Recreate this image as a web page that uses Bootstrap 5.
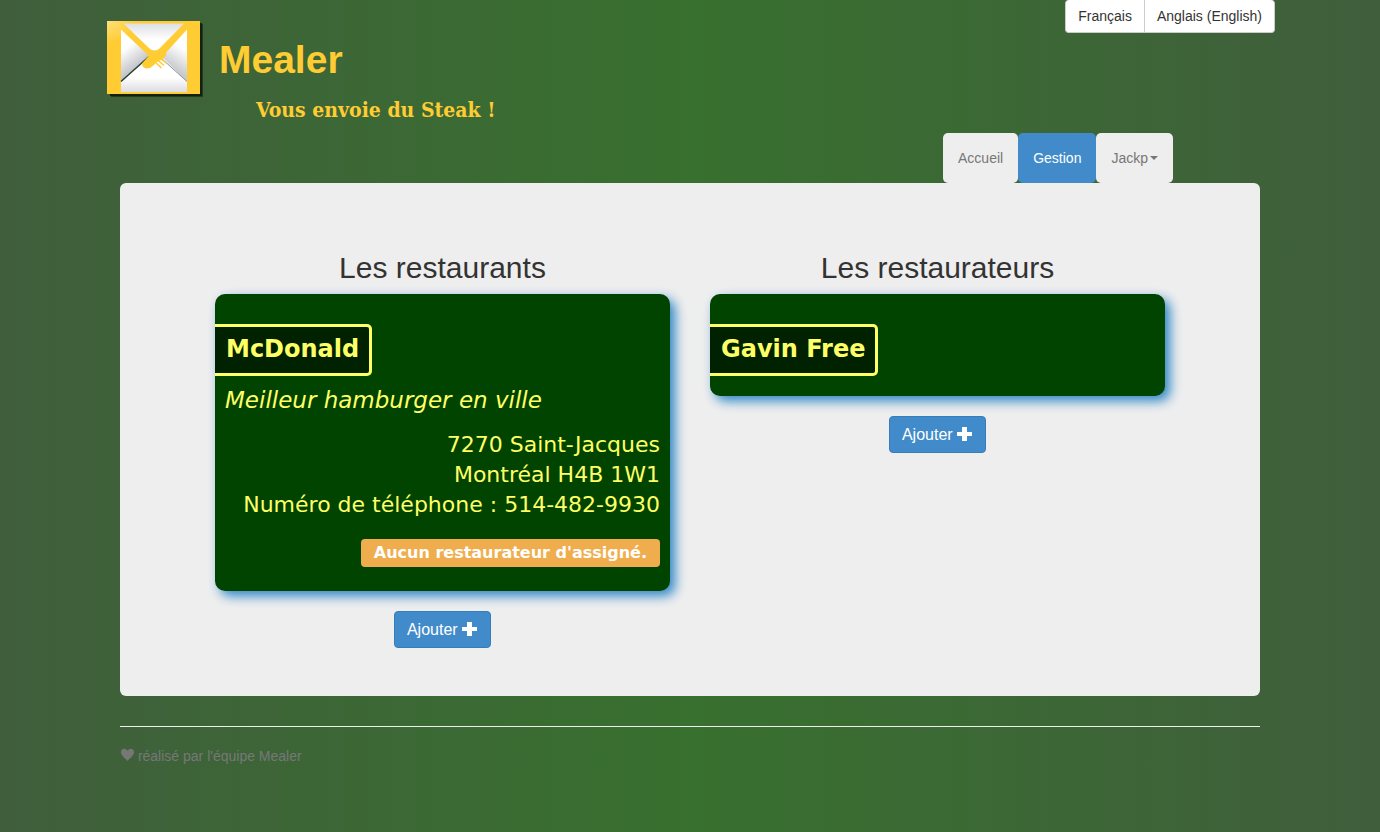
<!DOCTYPE html>
<html lang="fr">
<head>
<meta charset="utf-8">
<meta name="viewport" content="width=device-width, initial-scale=1">
<title>Mealer - Gestion</title>
<link href="https://cdn.jsdelivr.net/npm/bootstrap@5.3.0/dist/css/bootstrap.min.css" rel="stylesheet">
<style>
  body {
    min-height: 100vh;
    font: 14px/20px "Liberation Sans", Arial, sans-serif;
    color: #333;
    background: linear-gradient(to right, #405e3c, #38702f 50%, #405e3c);
  }
  .page { max-width: 1170px; padding: 0 15px; }
  .masthead { min-height: 133px; margin: 0 -15px; }
  .brand { color: #fc3; gap: 15px; padding: 19px 0 0 2px; }
  .brand:hover { color: #fc3; }
  .brand-name { font-size: 39px; line-height: 44px; font-weight: bold; padding-top: 19px; }
  .brand-tagline { font: bold 21px/24px "DejaVu Serif Condensed", "DejaVu Serif", serif; padding: 16px 0 0 37px; }
  .languages .btn {
    font-size: 14px; line-height: 20px; padding: 6px 12px;
    color: #333; background: #fff; border: 1px solid #ccc; border-top: 0;
  }
  .languages .btn:first-child { border-radius: 4px 0 0 4px; }
  .languages .btn:last-child { border-radius: 0 4px 4px 0; }
  .main-nav { margin-right: 87px; }
  .main-nav .nav-link { padding: 15px; line-height: 20px; color: #777; background: #eee; border-radius: 5px; }
  .main-nav .nav-link.active { color: #fff; background: #428bca; }
  .main-nav .dropdown-toggle::after { border-width: 4px 4px 0; margin-left: 2px; vertical-align: 3px; }
  .panel-main { background: #eee; border-radius: 6px; padding: 68px 95px 48px; }
  .columns { --bs-gutter-x: 40px; }
  h2 { font-size: 30px; line-height: 33px; font-weight: 400; margin-bottom: 10px; }
  .sheet {
    background: #040; color: #ff6; border-radius: 10px; padding: 30px 10px 20px;
    box-shadow: 5px 5px 12px #2c86c6; margin-bottom: 20px;
    font: 22px/30px "DejaVu Sans", sans-serif;
  }
  .sheet h3 {
    display: table; margin: 0 0 0 -10px; padding: 7px 10px 9px 11px; font-size: 24px; line-height: 30px; font-weight: bold;
    background: #020; border: 3px solid #ff6; border-left: 0; border-radius: 0 5px 5px 0;
  }
  .slogan { font-size: 23px; font-style: italic; margin: 9px 0 15px; }
  .sheet address { line-height: 30px; margin-bottom: 19px; }
  .sheet .badge { display: block; width: fit-content; margin: 0 0 4px auto; padding: 4px 13px; font-size: 16px; line-height: 20px; background: #f0ad4e; border-radius: 4px; }
  .btn-add { font-size: 16px; line-height: 23px; padding: 6px 12px; color: #fff; background: #428bca; border: 1px solid #357ebd; border-radius: 4px; }
  .btn-add svg { vertical-align: -2px; }
  footer { color: #777; border-top: 1px solid #eee; margin-top: 30px; padding-top: 19px; }
  footer svg { vertical-align: -1px; }
</style>
</head>
<body>
<div class="container page">
  <header class="masthead d-flex justify-content-between align-items-start">
    <a href="#" class="brand d-flex text-decoration-none">
      <svg width="97" height="79" viewBox="0 0 97 79" aria-hidden="true">
        <defs>
          <linearGradient id="flap" x1="0" y1="0" x2="0" y2="1"><stop offset="0" stop-color="#dedfe3"/><stop offset=".6" stop-color="#fff"/></linearGradient>
          <linearGradient id="sideL" gradientUnits="userSpaceOnUse" x1="20" y1="28" x2="34" y2="47"><stop offset="0" stop-color="#fff"/><stop offset="1" stop-color="#bfc0c6"/></linearGradient>
          <linearGradient id="sideR" gradientUnits="userSpaceOnUse" x1="74" y1="28" x2="62" y2="47"><stop offset="0" stop-color="#fff"/><stop offset="1" stop-color="#c8c9ce"/></linearGradient>
          <linearGradient id="base" x1="0" y1="0" x2="0" y2="1"><stop offset=".6" stop-color="#fff"/><stop offset="1" stop-color="#dcdce2"/></linearGradient>
          <radialGradient id="shine" cx="0" cy="0" r=".3"><stop offset="0" stop-color="#ffe07a"/><stop offset="1" stop-color="#fc3"/></radialGradient>
        </defs>
        <path d="M4 5h92v73H4z" fill="#12200e" opacity=".6"/>
        <path d="M3 4h92v73H3z" fill="#12200e"/>
        <path d="M0 2h93v73H0z" fill="url(#shine)"/>
        <path d="M14 62 42 37h13l25 25v11H14z" fill="url(#base)"/>
        <path d="M14 10.500 42 37 14 62.500z" fill="url(#sideL)"/>
        <path d="M80 10.500 55 38l25 24.500z" fill="url(#sideR)"/>
        <path d="M16.500 4.500H77L52 30q-4.500 3-9 0z" fill="url(#flap)"/>
        <path d="M14 62.500 42 37.500" stroke="#25402c" stroke-width="1.500"/>
        <path d="M80 62.500 54 39" stroke="#8b9095"/>
        <path d="m39 28 5 3q4 2 7 0l7-5 3 4-2 2q1 4-2 7-3 2-5 3-3 1-5 4-4 4-8 3.500-4-1-4-5l7-8-5-6z" fill="#fc3"/>
        <path d="m53 39 6 5m-8.500-3 6.500 5.500M48 43l6.500 6" stroke="#fc3" stroke-width="1.600"/>
      </svg>
      <span>
        <span class="brand-name d-block">Mealer</span>
        <span class="brand-tagline d-block">Vous envoie du Steak !</span>
      </span>
    </a>
    <div class="btn-group languages" role="group" aria-label="Langue">
      <button type="button" class="btn">Français</button>
      <button type="button" class="btn">Anglais (English)</button>
    </div>
  </header>

  <ul class="nav main-nav justify-content-end">
    <li class="nav-item"><a class="nav-link" href="#">Accueil</a></li>
    <li class="nav-item"><a class="nav-link active" aria-current="page" href="#">Gestion</a></li>
    <li class="nav-item dropdown">
      <a class="nav-link dropdown-toggle" href="#" role="button" data-bs-toggle="dropdown" aria-expanded="false">Jackp</a>
      <ul class="dropdown-menu"></ul>
    </li>
  </ul>

  <main class="panel-main">
    <div class="row columns">
      <section class="col-md-6 text-center">
        <h2>Les restaurants</h2>
        <article class="sheet text-start">
          <h3>McDonald</h3>
          <p class="slogan">Meilleur hamburger en ville</p>
          <address class="text-end">7270 Saint-Jacques<br>Montréal H4B 1W1<br>Numéro de téléphone : 514-482-9930</address>
          <span class="badge">Aucun restaurateur d'assigné.</span>
        </article>
        <button type="button" class="btn btn-add">Ajouter <svg width="16" height="16" viewBox="0 0 16 16" aria-hidden="true"><path d="M5 1h5v5h5v4h-5v5H5v-5H0V6h5z" fill="#fff"/></svg></button>
      </section>
      <section class="col-md-6 text-center">
        <h2>Les restaurateurs</h2>
        <article class="sheet text-start">
          <h3>Gavin Free</h3>
        </article>
        <button type="button" class="btn btn-add">Ajouter <svg width="16" height="16" viewBox="0 0 16 16" aria-hidden="true"><path d="M5 1h5v5h5v4h-5v5H5v-5H0V6h5z" fill="#fff"/></svg></button>
      </section>
    </div>
  </main>

  <footer>
    <svg width="14" height="14" viewBox="0 0 14 14" aria-hidden="true"><path d="M7.500 13C5.500 10.500 1.500 8 1 4.500.9 2 2.500.8 4.200.8 5.800.8 7 1.800 7.500 3 8 1.800 9.200.8 10.800.8 12.500.8 14.100 2 14 4.500 13.500 8 9.500 10.500 7.500 13z" fill="#777"/></svg>
    réalisé par l'équipe Mealer
  </footer>
</div>
<script src="https://cdn.jsdelivr.net/npm/bootstrap@5.3.0/dist/js/bootstrap.bundle.min.js"></script>
</body>
</html>
